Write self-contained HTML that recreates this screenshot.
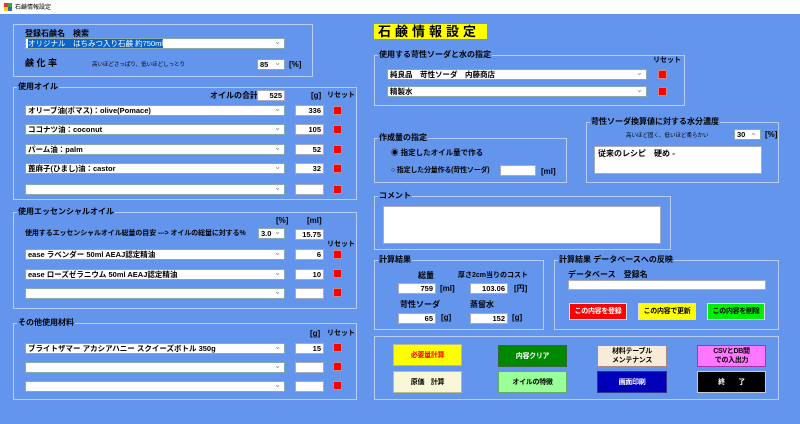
<!DOCTYPE html>
<html><head><meta charset="utf-8"><style>
*{box-sizing:border-box;margin:0;padding:0}
body{width:800px;height:424px;background:#6495ed;position:relative;overflow:hidden;font-family:"Liberation Sans","Noto Sans CJK JP",sans-serif;font-size:8px;font-weight:bold;color:#000}
.a{position:absolute;white-space:nowrap;line-height:10px}
.g{position:absolute;border:1px solid #b8cdf4}
.gl{position:absolute;background:#6495ed;padding:0 1px;line-height:10px;top:-6px;left:3px;white-space:nowrap}
.cb{position:absolute;background:#fff;border:1px solid #8aa;height:11px;line-height:9px;padding-left:2px;font-size:7.5px;white-space:nowrap;overflow:hidden}
.cb:after{content:"⌄";position:absolute;right:3px;top:-2px;font-size:8px;color:#888;font-weight:normal}
.tb{position:absolute;background:#fff;border:1px solid #aab;height:11px;line-height:9px;text-align:right;padding-right:2px;font-size:7.5px}
.r{position:absolute;width:9px;height:9px;background:#f00;border:1px solid #c88}
.bt{position:absolute;text-align:center;font-size:7px;display:flex;align-items:center;justify-content:center;line-height:9px;letter-spacing:-0.3px}
</style></head><body>
<div class="a" style="left:0;top:0;width:800px;height:14px;background:#fff"></div>
<div class="a" style="left:4px;top:3px;width:4px;height:4px;background:#e33"></div>
<div class="a" style="left:8px;top:3px;width:4px;height:4px;background:#3a3"></div>
<div class="a" style="left:4px;top:7px;width:4px;height:4px;background:#fc0"></div>
<div class="a" style="left:8px;top:7px;width:4px;height:4px;background:#36c"></div>
<div class="a" style="left:15px;top:3px;font-size:6px;font-weight:normal">石鹸情報設定</div>

<div class="g" style="left:13px;top:24px;width:300px;height:53px"></div>
<div class="a" style="left:25px;top:29px">登録石鹸名　検索</div>
<div class="cb" style="left:25px;top:38px;width:260px"><span style="background:#0a64d0;color:#fff;font-weight:normal">オリジナル　はちみつ入り石鹸 約750ml</span></div>
<div class="a" style="left:25px;top:58px;font-size:9px">鹸 化 率</div>
<div class="a" style="left:92px;top:60px;font-size:5.5px;font-weight:normal">高いほどさっぱり、低いほどしっとり</div>
<div class="cb" style="left:257px;top:59px;width:28px">85</div>
<div class="a" style="left:289px;top:60px">[%]</div>

<div class="g" style="left:13px;top:87px;width:344px;height:113px"><div class="gl">使用オイル</div></div>
<div class="a" style="left:210px;top:91px">オイルの合計</div>
<div class="tb" style="left:257px;top:90px;width:28px">525</div>
<div class="a" style="left:311px;top:91px">[g]</div><div class="a" style="left:327px;top:91px;font-size:7px">リセット</div>
<div class="cb" style="left:25px;top:105px;width:260px">オリーブ油(ポマス)：olive(Pomace)</div><div class="tb" style="left:295px;top:105px;width:29px">336</div><div class="r" style="left:333px;top:106px"></div>
<div class="cb" style="left:25px;top:124px;width:260px">ココナツ油：coconut</div><div class="tb" style="left:295px;top:124px;width:29px">105</div><div class="r" style="left:333px;top:125px"></div>
<div class="cb" style="left:25px;top:144px;width:260px">パーム油：palm</div><div class="tb" style="left:295px;top:144px;width:29px">52</div><div class="r" style="left:333px;top:145px"></div>
<div class="cb" style="left:25px;top:163px;width:260px">蓖麻子(ひまし)油：castor</div><div class="tb" style="left:295px;top:163px;width:29px">32</div><div class="r" style="left:333px;top:164px"></div>
<div class="cb" style="left:25px;top:184px;width:260px"></div><div class="tb" style="left:295px;top:184px;width:29px"></div><div class="r" style="left:333px;top:185px"></div>

<div class="g" style="left:13px;top:212px;width:344px;height:97px"><div class="gl">使用エッセンシャルオイル</div></div>
<div class="a" style="left:276px;top:216px">[%]</div><div class="a" style="left:307px;top:216px">[ml]</div>
<div class="a" style="left:25px;top:229px;font-size:7px;letter-spacing:-0.1px">使用するエッセンシャルオイル総量の目安 ---> オイルの総量に対する%</div>
<div class="cb" style="left:258px;top:228px;width:27px">3.0</div>
<div class="tb" style="left:295px;top:229px;width:29px">15.75</div>
<div class="a" style="left:327px;top:240px;font-size:7px">リセット</div>
<div class="cb" style="left:25px;top:249px;width:260px">ease ラベンダー 50ml AEAJ認定精油</div><div class="tb" style="left:295px;top:249px;width:29px">6</div><div class="r" style="left:333px;top:250px"></div>
<div class="cb" style="left:25px;top:269px;width:260px">ease ローズゼラニウム 50ml AEAJ認定精油</div><div class="tb" style="left:295px;top:269px;width:29px">10</div><div class="r" style="left:333px;top:269px"></div>
<div class="cb" style="left:25px;top:288px;width:260px"></div><div class="tb" style="left:295px;top:288px;width:29px"></div><div class="r" style="left:333px;top:288px"></div>

<div class="g" style="left:13px;top:323px;width:344px;height:77px"><div class="gl">その他使用材料</div></div>
<div class="a" style="left:310px;top:329px">[g]</div><div class="a" style="left:327px;top:329px;font-size:7px">リセット</div>
<div class="cb" style="left:25px;top:343px;width:260px">ブライトザマー アカシアハニー スクイーズボトル 350g</div><div class="tb" style="left:295px;top:343px;width:29px">15</div><div class="r" style="left:333px;top:343px"></div>
<div class="cb" style="left:25px;top:362px;width:260px"></div><div class="tb" style="left:295px;top:362px;width:29px"></div><div class="r" style="left:333px;top:362px"></div>
<div class="cb" style="left:25px;top:381px;width:260px"></div><div class="tb" style="left:295px;top:381px;width:29px"></div><div class="r" style="left:333px;top:381px"></div>

<div class="a" style="left:374px;top:24px;width:113px;height:15px;background:#ff0;font-size:13px;line-height:15px;letter-spacing:4px;padding-left:4px">石鹸情報設定</div>

<div class="g" style="left:374px;top:55px;width:311px;height:51px"><div class="gl">使用する苛性ソーダと水の指定</div></div>
<div class="a" style="left:653px;top:56px;font-size:7px">リセット</div>
<div class="cb" style="left:387px;top:69px;width:260px">純良品　苛性ソーダ　内藤商店</div><div class="r" style="left:658px;top:70px"></div>
<div class="cb" style="left:387px;top:86px;width:260px">精製水</div><div class="r" style="left:658px;top:87px"></div>

<div class="g" style="left:374px;top:138px;width:193px;height:45px"><div class="gl">作成量の指定</div></div>
<div class="a" style="left:391px;top:148px;font-size:7.5px">◉ 指定したオイル量で作る</div>
<div class="a" style="left:391px;top:166px;font-size:7px;letter-spacing:-0.2px">○ 指定した分量作る(苛性ソーダ)</div>
<div class="tb" style="left:500px;top:165px;width:36px"></div>
<div class="a" style="left:541px;top:167px">[ml]</div>

<div class="g" style="left:586px;top:122px;width:193px;height:61px"><div class="gl">苛性ソーダ換算値に対する水分濃度</div></div>
<div class="a" style="left:626px;top:131px;font-size:5.5px;font-weight:normal">高いほど固く、低いほど柔らかい</div>
<div class="cb" style="left:734px;top:129px;width:27px">30</div><div class="a" style="left:765px;top:130px">[%]</div>
<div class="a" style="left:594px;top:146px;width:168px;height:28px;background:#fff;border:1px solid #aab;padding:2px 3px">従来のレシピ　硬め -</div>

<div class="g" style="left:374px;top:196px;width:297px;height:54px"><div class="gl">コメント</div></div>
<div class="a" style="left:383px;top:206px;width:278px;height:38px;background:#fff;border:1px solid #aab"></div>

<div class="g" style="left:374px;top:260px;width:170px;height:70px"><div class="gl">計算結果</div></div>
<div class="a" style="left:418px;top:271px">総量</div><div class="a" style="left:458px;top:271px;font-size:7px">厚さ2cm当りのコスト</div>
<div class="tb" style="left:398px;top:283px;width:38px">759</div><div class="a" style="left:440px;top:284px">[ml]</div>
<div class="tb" style="left:470px;top:283px;width:38px">103.06</div><div class="a" style="left:514px;top:284px">[円]</div>
<div class="a" style="left:400px;top:300px">苛性ソーダ</div><div class="a" style="left:470px;top:300px">蒸留水</div>
<div class="tb" style="left:398px;top:313px;width:38px">65</div><div class="a" style="left:441px;top:313px">[g]</div>
<div class="tb" style="left:470px;top:313px;width:38px">152</div><div class="a" style="left:512px;top:313px">[g]</div>

<div class="g" style="left:554px;top:260px;width:225px;height:70px"><div class="gl">計算結果 データベースへの反映</div></div>
<div class="a" style="left:568px;top:270px">データベース　登録名</div>
<div class="a" style="left:568px;top:280px;width:198px;height:10px;background:#fff;border:1px solid #aab"></div>
<div class="bt" style="left:569px;top:303px;width:58px;height:17px;background:#f00;color:#fff;border:1px solid #ddd">この内容を登録</div>
<div class="bt" style="left:638px;top:303px;width:58px;height:17px;background:#ff0;border:1px solid #ddd">この内容で更新</div>
<div class="bt" style="left:707px;top:303px;width:58px;height:17px;background:#0e0;border:1px solid #ddd">この内容を削除</div>

<div class="g" style="left:374px;top:336px;width:405px;height:64px"></div>
<div class="bt" style="left:393px;top:344px;width:69px;height:22px;background:#ff0;color:#f00;border:1px solid #bb8">必要量計算</div>
<div class="bt" style="left:498px;top:345px;width:69px;height:22px;background:#080;color:#fff;border:1px solid #363">内容クリア</div>
<div class="bt" style="left:597px;top:345px;width:70px;height:22px;background:#f8ecd8;border:1px solid #a88">材料テーブル<br>メンテナンス</div>
<div class="bt" style="left:697px;top:345px;width:69px;height:22px;background:#f7f;border:1px solid #a3a">CSVとDB間<br>での入出力</div>
<div class="bt" style="left:393px;top:371px;width:69px;height:22px;background:#f8f8d8;border:1px solid #bb8">原価　計算</div>
<div class="bt" style="left:498px;top:371px;width:69px;height:22px;background:#9f9;border:1px solid #6a6">オイルの特徴</div>
<div class="bt" style="left:597px;top:371px;width:70px;height:22px;background:#00b;color:#fff;border:1px solid #338">画面印刷</div>
<div class="bt" style="left:697px;top:371px;width:69px;height:22px;background:#000;color:#fff;border:1px solid #ccc">終　　了</div>
</body></html>
